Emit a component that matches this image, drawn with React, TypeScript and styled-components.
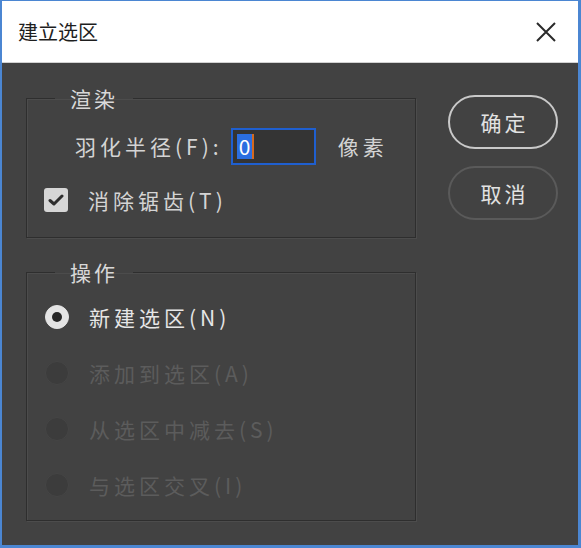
import React, { useState } from "react";
import styled, { createGlobalStyle } from "styled-components";

const GlobalStyle = createGlobalStyle`
  html, body {
    margin: 0;
    padding: 0;
    background: #ffffff;
  }
  * {
    box-sizing: border-box;
  }
`;

const FONT = `"Noto Sans CJK SC", "Noto Sans", sans-serif`;

const Window = styled.div`
  width: 581px;
  height: 548px;
  display: flex;
  flex-direction: column;
  border-style: solid;
  border-color: #4b86d2;
  border-width: 1px 3px 3px 2px;
  font-family: ${FONT};
`;

const TitleBar = styled.div`
  height: 62px;
  flex: none;
  display: flex;
  align-items: center;
  justify-content: space-between;
  padding: 0 20px 0 16px;
  background: #ffffff;
  border-bottom: 1px solid #d2d2d2;
`;

const Title = styled.div`
  font-size: 20px;
  color: #1e1e1e;
  line-height: 1;
`;

const CloseButton = styled.button`
  width: 24px;
  height: 24px;
  padding: 0;
  border: none;
  background: transparent;
  display: flex;
  align-items: center;
  justify-content: center;
  cursor: pointer;
`;

const Body = styled.div`
  flex: 1;
  display: flex;
  gap: 32px;
  padding: 23px 20px 0 24px;
  background: #424242;
`;

const Column = styled.div`
  width: 390px;
  display: flex;
  flex-direction: column;
  gap: 22px;
`;

const Group = styled.fieldset`
  margin: 0;
  padding: 0;
  min-width: 0;
  border: 1px solid #2e2e2e;
  box-shadow: 1px 1px 0 #4c4c4c, inset 1px 1px 0 #4c4c4c;
`;

const Legend = styled.legend`
  margin-left: 28px;
  padding: 0 15px;
  font-size: 21px;
  line-height: 24px;
  letter-spacing: 3px;
  color: #d8d8d8;
`;

const GroupContent = styled.div<{ $pad: string; $gap: number }>`
  display: flex;
  flex-direction: column;
  gap: ${(p) => p.$gap}px;
  padding: ${(p) => p.$pad};
`;

const Row = styled.div<{ $height: number; $indent?: number }>`
  display: flex;
  align-items: center;
  height: ${(p) => p.$height}px;
  margin-left: ${(p) => p.$indent ?? 0}px;
`;

const Label = styled.span<{ $dim?: boolean; $bright?: boolean }>`
  font-size: 21px;
  letter-spacing: 4px;
  line-height: 1;
  white-space: nowrap;
  color: ${(p) => (p.$dim ? "#5c5c5c" : p.$bright ? "#e6e6e6" : "#d4d4d4")};
`;

const InputBox = styled.div`
  width: 85px;
  height: 37px;
  margin: 0 22px 0 8px;
  border: 2px solid #1f5fcf;
  background: #343434;
  display: flex;
  align-items: center;
  padding-left: 4px;
`;

const Selected = styled.span`
  font-size: 21px;
  line-height: 25px;
  padding: 0 2px;
  background: #2b6ee0;
  color: #ffffff;
`;

const Caret = styled.span`
  width: 2px;
  height: 25px;
  background: #d4691f;
`;

const CheckBox = styled.span`
  width: 24px;
  height: 24px;
  margin-right: 20px;
  border-radius: 3px;
  background: #d6d6d6;
  display: flex;
  align-items: center;
  justify-content: center;
`;

const Radio = styled.span<{ $on: boolean }>`
  width: 24px;
  height: 24px;
  margin: 0 20px 0 1px;
  border-radius: 50%;
  display: flex;
  align-items: center;
  justify-content: center;
  background: ${(p) => (p.$on ? "#e4e4e4" : "#3c3c3c")};
  border: 1px solid ${(p) => (p.$on ? "#e4e4e4" : "#454545")};
`;

const Dot = styled.span`
  width: 10px;
  height: 10px;
  border-radius: 50%;
  background: #262626;
`;

const Buttons = styled.div`
  margin-top: 9px;
  display: flex;
  flex-direction: column;
  gap: 17px;
`;

const PillButton = styled.button<{ $primary?: boolean }>`
  width: 110px;
  height: 54px;
  border-radius: 27px;
  border: 2px solid ${(p) => (p.$primary ? "#c9c9c9" : "#5a5a5a")};
  background: transparent;
  color: #e2e2e2;
  font-family: ${FONT};
  font-size: 21px;
  letter-spacing: 3px;
  padding: 0 0 0 3px;
  cursor: pointer;
`;

const operations = [
  { label: "新建选区(N)", enabled: true },
  { label: "添加到选区(A)", enabled: false },
  { label: "从选区中减去(S)", enabled: false },
  { label: "与选区交叉(I)", enabled: false },
];

export default function App() {
  const [antiAlias] = useState(true);
  const [op] = useState(0);

  return (
    <>
      <GlobalStyle />
      <Window>
        <TitleBar>
          <Title>建立选区</Title>
          <CloseButton aria-label="关闭">
            <svg width="22" height="22" viewBox="0 0 22 22">
              <path d="M2 2 L20 20 M20 2 L2 20" stroke="#2a2a2a" strokeWidth="2" />
            </svg>
          </CloseButton>
        </TitleBar>
        <Body>
          <Column>
            <Group>
              <Legend>渲染</Legend>
              <GroupContent $pad="18px 0 22px 17px" $gap={20}>
                <Row $height={37} $indent={31}>
                  <Label>羽化半径(F):</Label>
                  <InputBox>
                    <Selected>0</Selected>
                    <Caret />
                  </InputBox>
                  <Label>像素</Label>
                </Row>
                <Row $height={30}>
                  <CheckBox>
                    {antiAlias && (
                      <svg width="16" height="14" viewBox="0 0 16 14">
                        <path
                          d="M2 7.5 L6 11 L14 3"
                          fill="none"
                          stroke="#2e2e2e"
                          strokeWidth="3"
                          strokeLinecap="round"
                          strokeLinejoin="round"
                        />
                      </svg>
                    )}
                  </CheckBox>
                  <Label>消除锯齿(T)</Label>
                </Row>
              </GroupContent>
            </Group>
            <Group>
              <Legend>操作</Legend>
              <GroupContent $pad="16px 0 18px 17px" $gap={22}>
                {operations.map((item, i) => (
                  <Row key={item.label} $height={34}>
                    <Radio $on={i === op}>{i === op && <Dot />}</Radio>
                    <Label $dim={!item.enabled} $bright={item.enabled}>
                      {item.label}
                    </Label>
                  </Row>
                ))}
              </GroupContent>
            </Group>
          </Column>
          <Buttons>
            <PillButton $primary>确定</PillButton>
            <PillButton>取消</PillButton>
          </Buttons>
        </Body>
      </Window>
    </>
  );
}
